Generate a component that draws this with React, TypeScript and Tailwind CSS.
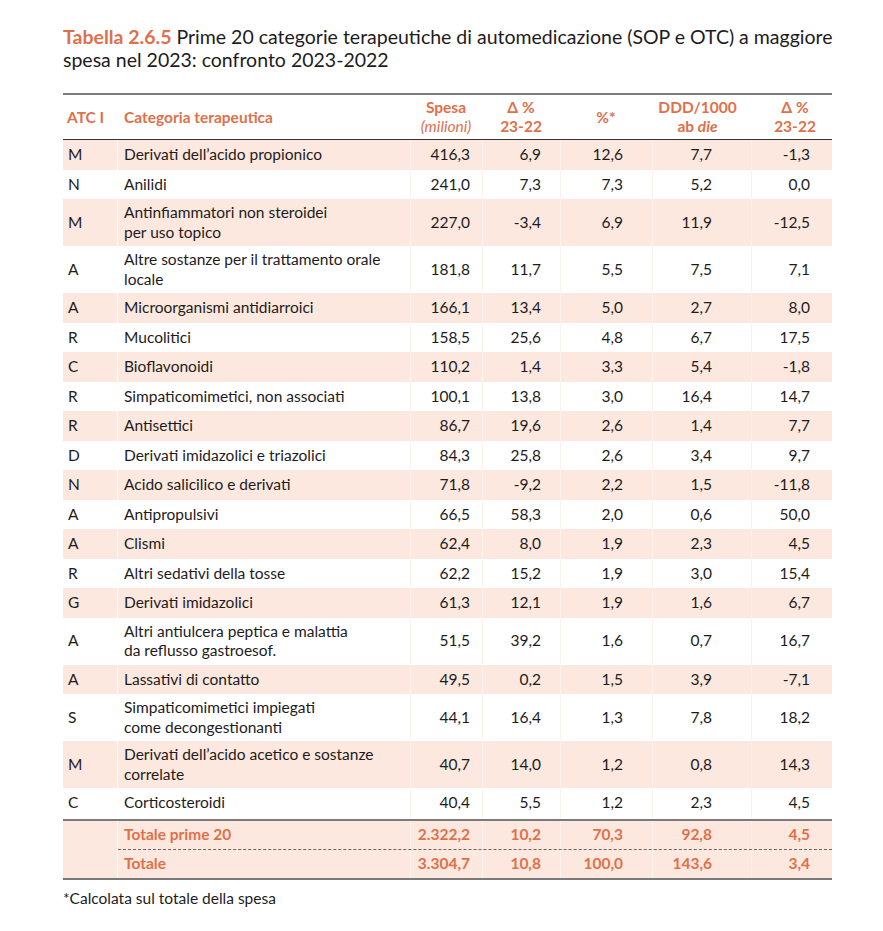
import React from "react";

type Row = {
  atc: string;
  name: string[];
  spesa: string;
  delta: string;
  perc: string;
  ddd: string;
  deltaDdd: string;
};

const rows: Row[] = [
  { atc: "M", name: ["Derivati dell’acido propionico"], spesa: "416,3", delta: "6,9", perc: "12,6", ddd: "7,7", deltaDdd: "-1,3" },
  { atc: "N", name: ["Anilidi"], spesa: "241,0", delta: "7,3", perc: "7,3", ddd: "5,2", deltaDdd: "0,0" },
  { atc: "M", name: ["Antinfiammatori non steroidei", "per uso topico"], spesa: "227,0", delta: "-3,4", perc: "6,9", ddd: "11,9", deltaDdd: "-12,5" },
  { atc: "A", name: ["Altre sostanze per il trattamento orale", "locale"], spesa: "181,8", delta: "11,7", perc: "5,5", ddd: "7,5", deltaDdd: "7,1" },
  { atc: "A", name: ["Microorganismi antidiarroici"], spesa: "166,1", delta: "13,4", perc: "5,0", ddd: "2,7", deltaDdd: "8,0" },
  { atc: "R", name: ["Mucolitici"], spesa: "158,5", delta: "25,6", perc: "4,8", ddd: "6,7", deltaDdd: "17,5" },
  { atc: "C", name: ["Bioflavonoidi"], spesa: "110,2", delta: "1,4", perc: "3,3", ddd: "5,4", deltaDdd: "-1,8" },
  { atc: "R", name: ["Simpaticomimetici, non associati"], spesa: "100,1", delta: "13,8", perc: "3,0", ddd: "16,4", deltaDdd: "14,7" },
  { atc: "R", name: ["Antisettici"], spesa: "86,7", delta: "19,6", perc: "2,6", ddd: "1,4", deltaDdd: "7,7" },
  { atc: "D", name: ["Derivati imidazolici e triazolici"], spesa: "84,3", delta: "25,8", perc: "2,6", ddd: "3,4", deltaDdd: "9,7" },
  { atc: "N", name: ["Acido salicilico e derivati"], spesa: "71,8", delta: "-9,2", perc: "2,2", ddd: "1,5", deltaDdd: "-11,8" },
  { atc: "A", name: ["Antipropulsivi"], spesa: "66,5", delta: "58,3", perc: "2,0", ddd: "0,6", deltaDdd: "50,0" },
  { atc: "A", name: ["Clismi"], spesa: "62,4", delta: "8,0", perc: "1,9", ddd: "2,3", deltaDdd: "4,5" },
  { atc: "R", name: ["Altri sedativi della tosse"], spesa: "62,2", delta: "15,2", perc: "1,9", ddd: "3,0", deltaDdd: "15,4" },
  { atc: "G", name: ["Derivati imidazolici"], spesa: "61,3", delta: "12,1", perc: "1,9", ddd: "1,6", deltaDdd: "6,7" },
  { atc: "A", name: ["Altri antiulcera peptica e malattia", "da reflusso gastroesof."], spesa: "51,5", delta: "39,2", perc: "1,6", ddd: "0,7", deltaDdd: "16,7" },
  { atc: "A", name: ["Lassativi di contatto"], spesa: "49,5", delta: "0,2", perc: "1,5", ddd: "3,9", deltaDdd: "-7,1" },
  { atc: "S", name: ["Simpaticomimetici impiegati", "come decongestionanti"], spesa: "44,1", delta: "16,4", perc: "1,3", ddd: "7,8", deltaDdd: "18,2" },
  { atc: "M", name: ["Derivati dell’acido acetico e sostanze", "correlate"], spesa: "40,7", delta: "14,0", perc: "1,2", ddd: "0,8", deltaDdd: "14,3" },
  { atc: "C", name: ["Corticosteroidi"], spesa: "40,4", delta: "5,5", perc: "1,2", ddd: "2,3", deltaDdd: "4,5" },
];

const cols = "grid grid-cols-[55px_292px_72px_78px_92px_99px_81px]";
// faint cell dividers inside the shaded bands; the one after ATC is a clean white line
const cell = "flex items-center border-l border-[#fdf1eb]";
const firstCell = "flex items-center border-r border-white";

function DataRow({ row, shaded }: { row: Row; shaded: boolean }) {
  const bg = shaded ? "bg-[#fce8de]" : "bg-white";
  return (
    <div className={`${cols} min-h-[29.5px] leading-[19.5px]`}>
      <div className={`${firstCell} ${bg} pl-[5px]`}>{row.atc}</div>
      <div className={`${bg} flex flex-col justify-center py-[4px] pl-[6px]`}>
        {row.name.map((line) => (
          <span key={line}>{line}</span>
        ))}
      </div>
      <div className={`${cell} ${bg} justify-end pr-[12px]`}>{row.spesa}</div>
      <div className={`${cell} ${bg} justify-end pr-[19px]`}>{row.delta}</div>
      <div className={`${cell} ${bg} justify-end pr-[29px]`}>{row.perc}</div>
      <div className={`${cell} ${bg} justify-end pr-[39px]`}>{row.ddd}</div>
      <div className={`${cell} ${bg} justify-end pr-[22px]`}>{row.deltaDdd}</div>
    </div>
  );
}

function TotalRow({ label, values }: { label: string; values: string[] }) {
  const pads = ["pr-[12px]", "pr-[19px]", "pr-[29px]", "pr-[39px]", "pr-[22px]"];
  return (
    <div className={`${cols} h-[28px] font-bold text-[#e0704a]`}>
      <div className={`${firstCell} bg-[#fce8de]`} />
      <div className="flex items-center bg-[#fce8de] pl-[6px]">{label}</div>
      {values.map((v, i) => (
        <div key={i} className={`${cell} bg-[#fce8de] justify-end ${pads[i]}`}>
          {v}
        </div>
      ))}
    </div>
  );
}

export default function App() {
  return (
    <div className="min-h-screen bg-white pl-[63px] pt-[25px] font-['Lato',sans-serif] text-[#1e1b1c]">
      <h1 className="text-[19.5px] leading-[23px] font-normal">
        <span className="font-bold text-[#e0704a]">Tabella 2.6.5</span> Prime 20 categorie terapeutiche di
        automedicazione (SOP e OTC) a maggiore
        <br />
        spesa nel 2023: confronto 2023-2022
      </h1>

      <div className="mt-[22px] w-[769px] text-[15.5px]">
        <div className="border-t-2 border-[#7a7a7a]" />
        <div className={`${cols} h-[45px] border-b border-[#333] font-bold leading-[19px] text-[#e0704a]`}>
          <div className="flex items-center pl-[4px]">ATC I</div>
          <div className="flex items-center pl-[6px]">Categoria terapeutica</div>
          <div className="flex flex-col items-center justify-center">
            <span>Spesa</span>
            <span className="font-normal italic">(milioni)</span>
          </div>
          <div className="flex flex-col items-center justify-center">
            <span>Δ %</span>
            <span>23-22</span>
          </div>
          <div className="flex items-center justify-center">%*</div>
          <div className="flex flex-col items-center justify-center pr-[8px]">
            <span>DDD/1000</span>
            <span>
              ab <i>die</i>
            </span>
          </div>
          <div className="flex flex-col items-center justify-center pl-[7px]">
            <span>Δ %</span>
            <span>23-22</span>
          </div>
        </div>

        <div className="pb-[1px]">
          {rows.map((row, i) => (
            <DataRow key={row.name[0]} row={row} shaded={i % 2 === 0} />
          ))}
        </div>

        <div className="border-t-2 border-[#7a7a7a]" />
        <TotalRow label="Totale prime 20" values={["2.322,2", "10,2", "70,3", "92,8", "4,5"]} />
        <div className={`${cols} bg-[#fce8de]`}>
          <div className="border-r border-white" />
          <div className="col-span-6 border-t border-dashed border-[#666]" />
        </div>
        <TotalRow label="Totale" values={["3.304,7", "10,8", "100,0", "143,6", "3,4"]} />
        <div className="border-t-2 border-[#7a7a7a]" />
      </div>

      <p className="mt-[8px] text-[15.5px] leading-[20px]">*Calcolata sul totale della spesa</p>
    </div>
  );
}
